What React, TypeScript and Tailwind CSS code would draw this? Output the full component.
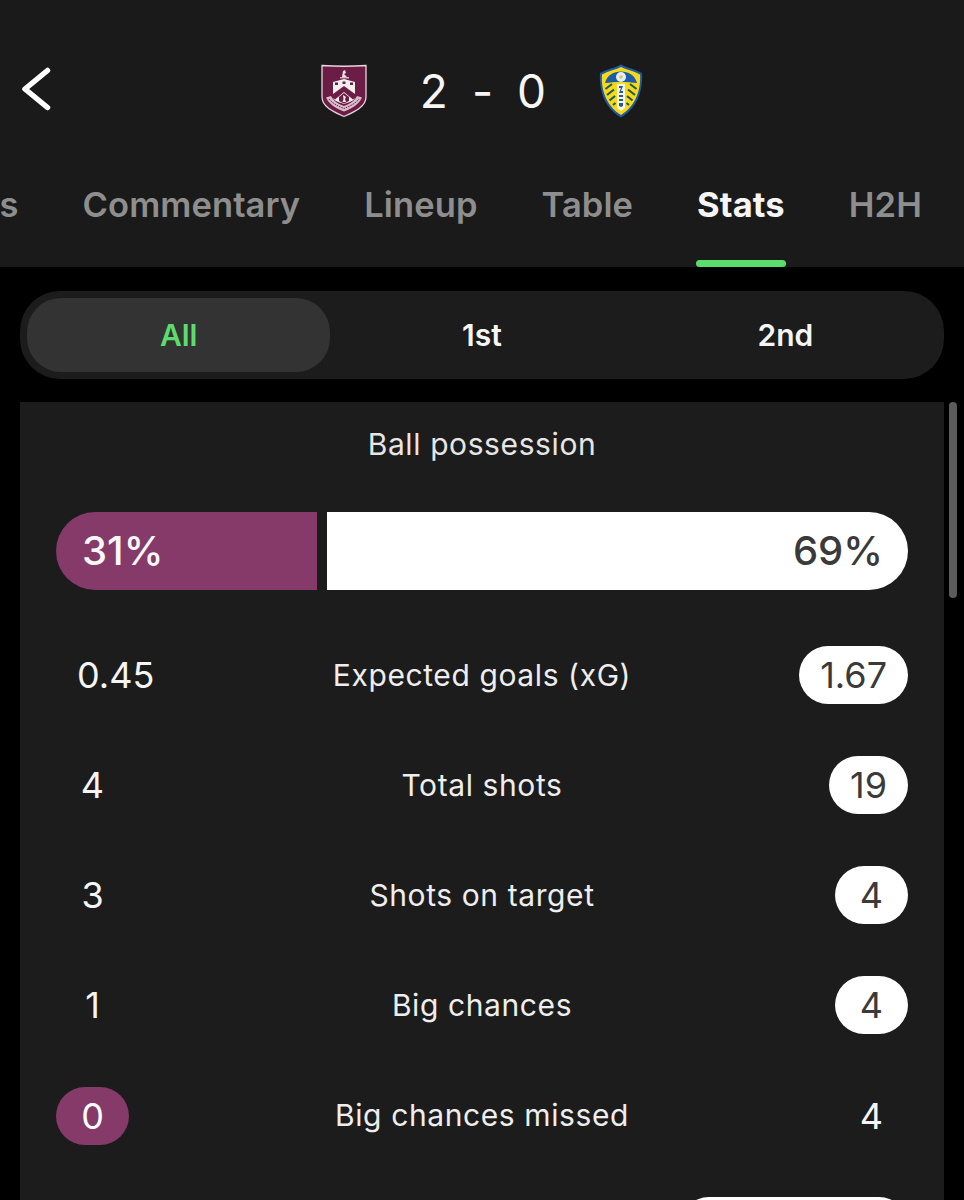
const tabs = ["Details", "Commentary", "Lineup", "Table", "Stats", "H2H"];

const rows = [
  { home: "0.45", label: "Expected goals (xG)", away: "1.67", winner: "away" },
  { home: "4", label: "Total shots", away: "19", winner: "away" },
  { home: "3", label: "Shots on target", away: "4", winner: "away" },
  { home: "1", label: "Big chances", away: "4", winner: "away" },
  { home: "0", label: "Big chances missed", away: "4", winner: "home" },
];

const BurnleyCrest = () => (
  <svg viewBox="0 0 46 54" className="w-[46px] h-[54px]">
    <path d="M1 1.500Q23 3 45 1.500V33C45 43 33 48 23 52.500C13 48 1 43 1 33Z" fill="#6c1d45" stroke="#e8d5df" strokeWidth="1.3" />
    <path d="M21 13L22 7L24 6L25 9L23 10L26 13Z" fill="#f1e6ea" />
    <path d="M19 13H28V14.500H19Z" fill="#cdb7c2" />
    <path d="M12 18L23 15L34 18V33C34 37 28 38 23 40C18 38 12 37 12 33Z" fill="#f4eeee" />
    <path d="M14 18.500H17V21H14ZM21.500 17.500H24.500V20H21.500ZM29 18.500H32V21H29Z" fill="#6c1d45" />
    <path d="M12 30L23 22L34 30V34L32 35.500L23 28L14 35.500L12 34Z" fill="#6c1d45" />
    <path d="M18 33L23 29L28 33V37L23 39.500L18 37Z" fill="#6c1d45" />
    <path d="M22 31L25 33L24 35L25 38H21.500L22.500 35Z" fill="#f4eeee" />
    <path d="M5 33.500C9 42 16 44.500 23 47.500C30 44.500 37 42 41 33.500L36 32C33 38 28 40 23 42C18 40 13 38 10 32Z" fill="#d9bcca" />
    <path d="M8 35C12 40 18 42.500 23 44.500C28 42.500 34 40 38 35" fill="none" stroke="#6c1d45" strokeWidth="1" strokeDasharray="1.500 1" />
  </svg>
);

const LeedsCrest = () => (
  <svg viewBox="0 0 44 54" className="w-[44px] h-[54px]">
    <path d="M22 0.500C28 4 36 5 43 9C44 24 40 43 22 53.500C4 43 0 24 1 9C8 5 16 4 22 0.500Z" fill="#1d5ba4" />
    <path d="M22 3C28 6 35 7 41 10.500C42 24 38 41 22 51C6 41 2 24 3 10.500C9 7 16 6 22 3Z" fill="#f7d917" />
    <path d="M6 19C8 11 15 7.500 22 7.500C29 7.500 36 11 38 19C28 17.500 16 17.500 6 19Z" fill="#1d5ba4" />
    <circle cx="22" cy="13" r="5" fill="#e4edf2" />
    <circle cx="22" cy="13" r="1.800" fill="#d8c66a" />
    <g stroke="#1f5a62" strokeWidth="2.200">
      <path d="M6.500 25L13 20M8 31L15 25.500M10.500 36.500L16 32M14 41L16.500 39" />
      <path d="M37.500 25L31 20M36 31L29 25.500M33.500 36.500L28 32M30 41L27.500 39" />
    </g>
    <path d="M18 20H26V44L22 47L18 44Z" fill="#f7f5df" />
    <path d="M20 22H24L22 27H24V29H20L22 24H20ZM20 31H24V33H20ZM20 35H24V37H20ZM20 39H24V42L22 43L20 42Z" fill="#1d5ba4" />
  </svg>
);

const Score = ({ value, winner, side }: { value: string; winner: boolean; side: "home" | "away" }) => {
  if (!winner) {
    return <span className="min-w-[73px] px-[21px] text-center text-[36px] leading-[58px] text-[#f5f5f5]">{value}</span>;
  }
  return (
    <span
      className={`h-[58px] min-w-[73px] px-[21px] rounded-full text-center text-[36px] leading-[58px] ${
        side === "home" ? "bg-[#853a69] text-white" : "bg-white text-[#3a3a3a]"
      }`}
    >
      {value}
    </span>
  );
};

export default function App() {
  return (
    <div className="h-[1200px] overflow-hidden bg-black text-white font-['Inter',sans-serif]">
      <header className="h-[267px] bg-[#1a1a1a] flex flex-col">
        <div className="relative h-[182px] flex items-start justify-center pt-[64px]">
          <svg viewBox="0 0 30 44" className="absolute left-[21px] top-[67px] w-[30px] h-[44px]" fill="none">
            <path d="M26.500 3.500L4 22L26.500 40.500" stroke="#ffffff" strokeWidth="5.500" strokeLinecap="round" strokeLinejoin="round" />
          </svg>
          <BurnleyCrest />
          <div className="mx-[53px] flex items-center h-[54px] text-[46px] font-normal text-[#f5f5f5]">
            <span>2</span>
            <span className="mx-[24px]">-</span>
            <span>0</span>
          </div>
          <LeedsCrest />
        </div>
        <nav className="flex-1 flex justify-end gap-[64px] pr-[42px] overflow-hidden">
          {tabs.map((tab) => (
            <div key={tab} className="relative shrink-0">
              <span
                className={`block -mt-[1px] text-[34.500px] leading-[48px] tracking-[0.1px] ${
                  tab === "Stats" ? "font-bold text-[#f5f5f5]" : "font-semibold text-[#8e8e8e]"
                }`}
              >
                {tab}
              </span>
              {tab === "Stats" && (
                <span className="absolute -left-[1px] -right-[1px] bottom-0 h-[7px] rounded-full bg-[#5ddc6e]" />
              )}
            </div>
          ))}
        </nav>
      </header>

      <main className="px-[20px] pt-[24px]">
        <div className="h-[88px] rounded-[40px] bg-[#1c1c1c] grid grid-cols-3 p-[7px] text-[30px] font-semibold">
          <div className="rounded-[34px] bg-[#333333] text-[#5ddc6e] flex items-center justify-center">All</div>
          <div className="flex items-center justify-center text-[#f5f5f5]">1st</div>
          <div className="flex items-center justify-center text-[#f5f5f5]">2nd</div>
        </div>

        <div className="relative mt-[23px]">
          <span className="absolute -right-[13px] top-0 w-[8px] h-[196px] rounded-full bg-[#5c5c5c]" />
          <section className="bg-[#1c1c1c] px-[36px] pt-[22px] pb-[20px] flex flex-col">
            <h2 className="text-center text-[30px] leading-[40px] tracking-[0.6px] text-[#e6e6e6] font-normal">
              Ball possession
            </h2>
            <div className="mt-[48px] h-[78px] flex gap-[10px] text-[40px] font-medium">
              <div className="w-[261px] rounded-l-full bg-[#853a69] flex items-center pl-[26px] text-[#f8f8f8]">31%</div>
              <div className="flex-1 rounded-r-full bg-white flex items-center justify-end pr-[25px] text-[#3a3a3a]">69%</div>
            </div>
            <div className="mt-[56px] flex flex-col gap-[52.150px]">
              {rows.map((row) => (
                <div key={row.label} className="h-[58px] flex items-center justify-between relative">
                  <Score value={row.home} winner={row.winner === "home"} side="home" />
                  <span className="absolute inset-x-0 text-center text-[30px] tracking-[0.6px] text-[#eeeeee]">
                    {row.label}
                  </span>
                  <Score value={row.away} winner={row.winner === "away"} side="away" />
                </div>
              ))}
              <div className="flex justify-end">
                <span className="h-[58px] w-[228px] rounded-full bg-white" />
              </div>
            </div>
          </section>
        </div>
      </main>
    </div>
  );
}
